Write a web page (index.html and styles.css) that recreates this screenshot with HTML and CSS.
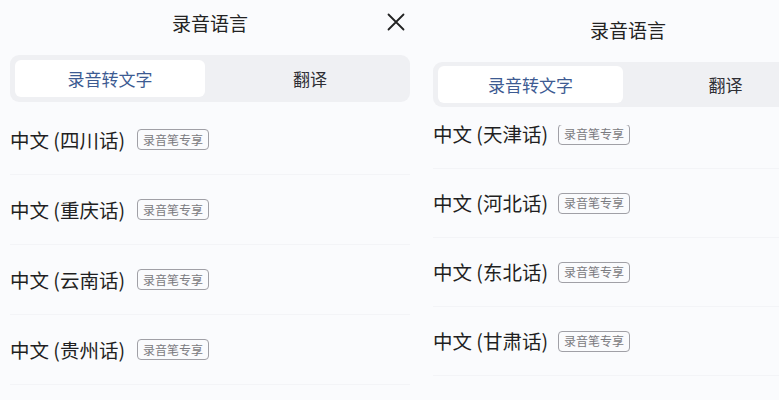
FILE: index.html
```html
<!DOCTYPE html>
<html lang="zh-CN">
<head>
<meta charset="utf-8">
<link rel="stylesheet" href="styles.css">
</head>
<body>
<div class="screens">
  <section class="panel">
    <header class="header">
      <h1 class="title">录音语言</h1>
      <svg class="close" viewBox="0 0 18 18" width="18" height="18"><path d="M1.5 1.5 L16.5 16.5 M16.5 1.5 L1.5 16.5" stroke="#222" stroke-width="1.8" fill="none" stroke-linecap="round"/></svg>
    </header>
    <div class="tabs">
      <div class="tab active">录音转文字</div>
      <div class="tab">翻译</div>
    </div>
    <div class="list">
      <div class="list-inner">
        <div class="row"><span class="name">中文 (四川话)</span><span class="badge">录音笔专享</span></div>
        <div class="row"><span class="name">中文 (重庆话)</span><span class="badge">录音笔专享</span></div>
        <div class="row"><span class="name">中文 (云南话)</span><span class="badge">录音笔专享</span></div>
        <div class="row"><span class="name">中文 (贵州话)</span><span class="badge">录音笔专享</span></div>
      </div>
    </div>
  </section>
  <section class="panel panel-right">
    <header class="header">
      <h1 class="title">录音语言</h1>
    </header>
    <div class="tabs">
      <div class="tab active">录音转文字</div>
      <div class="tab">翻译</div>
    </div>
    <div class="list">
      <div class="list-inner">
        <div class="row"><span class="name">中文 (天津话)</span><span class="badge">录音笔专享</span></div>
        <div class="row"><span class="name">中文 (河北话)</span><span class="badge">录音笔专享</span></div>
        <div class="row"><span class="name">中文 (东北话)</span><span class="badge">录音笔专享</span></div>
        <div class="row"><span class="name">中文 (甘肃话)</span><span class="badge">录音笔专享</span></div>
        <div class="row"><span class="name">中文 (山西话)</span><span class="badge">录音笔专享</span></div>
      </div>
    </div>
  </section>
</div>
</body>
</html>
```
FILE: styles.css
```css
* { box-sizing: border-box; }
html, body {
  margin: 0;
  padding: 0;
  background: #fafbfd;
  font-family: "Noto Sans CJK SC", "Noto Sans", sans-serif;
  color: #1c1c1e;
  overflow: hidden;
}
.screens {
  display: flex;
  width: 779px;
  height: 400px;
  overflow: hidden;
}
.panel {
  flex: 0 0 420px;
  width: 420px;
  height: 400px;
  padding: 0 10px;
  display: flex;
  flex-direction: column;
  background: #fafbfd;
}
.panel-right {
  flex-basis: 410px;
  width: 410px;
  margin-left: 3px;
  padding-top: 7px;
}
.header {
  height: 44px;
  position: relative;
  display: flex;
  align-items: center;
  justify-content: center;
  flex: 0 0 auto;
}
.title {
  margin: 0;
  font-size: 19px;
  font-weight: 400;
  color: #222;
  line-height: 1;
}
.close {
  position: absolute;
  right: 5px;
  top: 13px;
}
.tabs {
  margin-top: 11px;
  height: 47px;
  background: #eff0f3;
  border-radius: 9px;
  padding: 5px 5px;
  display: flex;
  gap: 10px;
  flex: 0 0 auto;
}
.panel-right .tabs {
  height: 45px;
  padding: 4px 5px;
}
.tab {
  flex: 1;
  display: flex;
  align-items: center;
  justify-content: center;
  font-size: 17px;
  color: #2e2e33;
  border-radius: 6px;
}
.tab.active {
  background: #ffffff;
  color: #3d5b92;
}
.list {
  margin-top: 3px;
  flex: 1;
  overflow: hidden;
}
.panel-right .list {
  margin-top: 18px;
}
.panel-right .list-inner {
  margin-top: -25px;
}
.row {
  height: 70px;
  display: flex;
  align-items: center;
  gap: 12px;
  border-bottom: 1px solid #f3f4f7;
  margin: 0 -3px;
  padding: 0 3px;
}
.panel-right .row {
  height: 69px;
  gap: 10px;
}
.name {
  font-size: 19.5px;
  color: #1f1f22;
  line-height: 1;
}
.badge {
  height: 21px;
  padding: 0 5px;
  border: 1px solid #a0a0a6;
  border-radius: 4px;
  font-size: 12px;
  color: #7a7a80;
  display: flex;
  align-items: center;
  line-height: 1;
}
```
